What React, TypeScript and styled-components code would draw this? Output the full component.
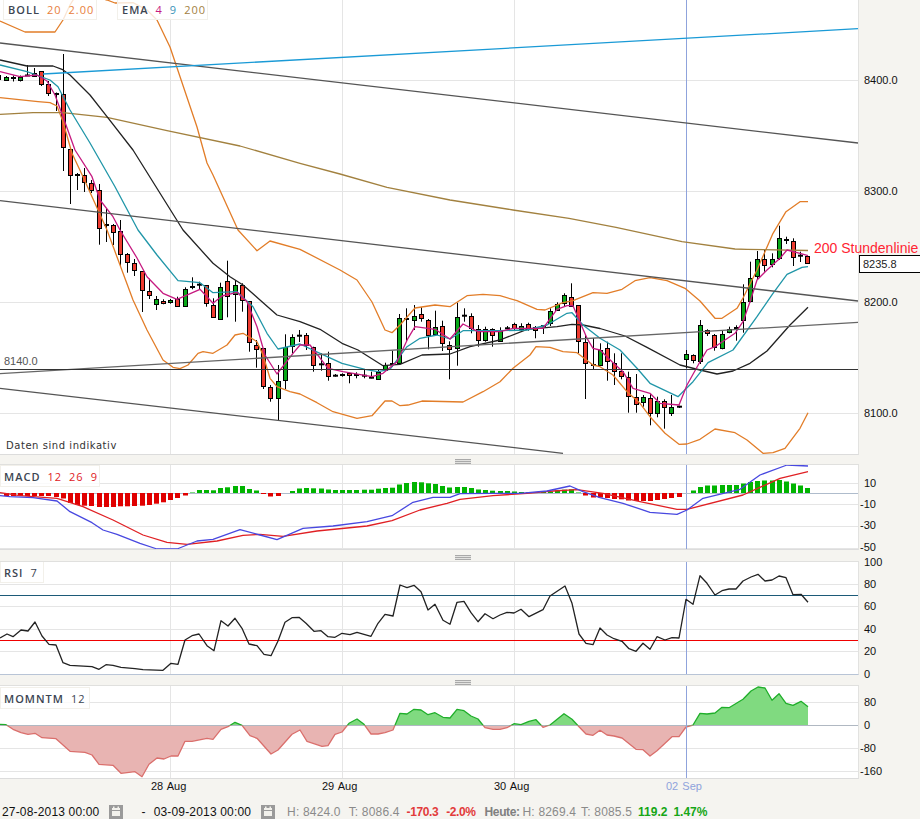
import React from 'react'
import styled, { createGlobalStyle } from 'styled-components'

type Pt = number[]
// kind, wick top, body top, body bottom, wick bottom
type Candle = [string, number, number, number, number]

const GlobalStyle = createGlobalStyle`
  html, body {
    margin: 0;
    padding: 0;
    background: #f5f4f0;
    overflow: hidden;
  }
`

const candles: Candle[] = [
  ['r', 75, 75, 79, 81], ['g', 76, 77, 79.5, 81], ['d', 75.5, 78, 78, 81.5], ['g', 75.5, 77, 79.5, 81.5],
  ['d', 65, 75.5, 75.5, 76], ['g', 68, 72.5, 75.5, 76], ['r', 71, 71, 83.5, 86], ['r', 81, 83.5, 92.3, 96],
  ['d', 92.5, 94, 94, 111], ['r', 54, 94, 147, 171], ['r', 147, 148.5, 174.5, 204], ['d', 173, 175, 175, 190],
  ['r', 168, 175, 182, 192], ['r', 180, 183, 190, 193], ['r', 184, 190, 228, 244.7], ['d', 209, 225, 225, 242],
  ['r', 224, 224.5, 231, 245], ['r', 220, 231, 254, 267], ['r', 253, 254, 262, 272.7], ['r', 259, 263.3, 270.7, 276],
  ['r', 271, 271.3, 290, 312], ['r', 278.7, 291.3, 295.7, 299], ['g', 296, 299.3, 304.3, 310], ['r', 299.3, 301.3, 303.3, 304.3],
  ['g', 299, 300.3, 302.3, 303.7], ['r', 296.7, 299, 305.7, 306.7], ['g', 287.3, 289.3, 306.3, 307], ['d', 277.3, 287, 287, 289.3],
  ['d', 281.7, 284.7, 284.7, 289.3], ['r', 285.3, 285.3, 303.3, 306.7], ['r', 298.3, 305.3, 317.3, 318], ['g', 282.7, 286.7, 318.3, 318.7],
  ['r', 260.7, 280.7, 295.3, 317.3], ['g', 280, 285.3, 294, 321.7], ['r', 283.3, 285.3, 300.7, 311.7], ['r', 301.3, 301.3, 342.7, 351.7],
  ['r', 340, 344.7, 348.3, 367.7], ['r', 348.3, 348.3, 386.3, 389], ['r', 385, 387.3, 398.7, 401.7], ['g', 365, 381.3, 398.7, 420],
  ['g', 334.3, 346.7, 379.7, 389], ['g', 334.3, 336.7, 345.7, 353.3], ['d', 330, 335.7, 335.7, 342], ['r', 333, 335.3, 345, 350],
  ['r', 346.7, 346.7, 364.7, 371.7], ['d', 353.3, 364.3, 364.3, 370.7], ['r', 351.7, 362.7, 376, 380.7], ['d', 374, 375.7, 375.7, 376.7],
  ['d', 373.3, 375, 375, 376.7], ['r', 372.7, 373.3, 375.7, 383.3], ['d', 372.3, 375, 375, 378.3], ['d', 370, 375.7, 375.7, 378.3],
  ['d', 371.7, 377.7, 377.7, 378.3], ['g', 370, 371.7, 378.7, 379.3], ['g', 362.7, 364.7, 369.3, 370], ['d', 350.7, 364, 364, 366.7],
  ['g', 314, 318.3, 363.7, 365], ['d', 308.3, 319, 319, 340.7], ['g', 305, 315.7, 319.7, 330], ['r', 307.3, 314.3, 318.7, 321.7],
  ['r', 319, 319.7, 334.3, 349.3], ['g', 310.7, 327.3, 334.7, 335], ['r', 320.7, 326.3, 343.7, 351], ['r', 341.3, 344.7, 348.3, 379.3],
  ['g', 302.7, 317.3, 348.3, 365.7], ['d', 308.3, 315.7, 315.7, 321.7], ['r', 313.3, 315.7, 327.3, 333.3], ['r', 325, 328.7, 339.3, 346.7],
  ['g', 326.7, 329.3, 340.7, 341.7], ['r', 328.3, 329.3, 335.3, 346.7], ['g', 327.3, 331.3, 341.3, 342], ['d', 326, 328.3, 328.3, 329.3],
  ['r', 322.7, 324.3, 328.7, 330.7], ['g', 323.3, 325.7, 329, 330.7], ['r', 322.7, 324.3, 328.7, 330.7], ['r', 326, 327.3, 330, 338.3],
  ['d', 325, 326, 326, 334], ['g', 308.3, 311.3, 323.3, 326], ['g', 302.3, 304.3, 310.3, 311], ['g', 293.3, 295.3, 303.7, 306],
  ['r', 283.3, 296.7, 305.3, 306], ['r', 305.3, 305.3, 341.3, 353.3], ['r', 334, 342.3, 363.7, 399], ['d', 338, 365, 365, 369],
  ['g', 343.3, 350, 364.7, 364.7], ['r', 341.7, 348.3, 361.3, 380.7], ['r', 353.3, 362.7, 370.3, 385], ['r', 353.3, 371, 375.7, 379.3],
  ['r', 371.7, 376.7, 395.7, 412.7], ['r', 374, 396.7, 403.3, 412.7], ['g', 395, 397.3, 402.3, 406.7], ['r', 394, 397.7, 412.3, 425.3],
  ['g', 396.7, 400.7, 412.3, 417.3], ['r', 399.3, 401.3, 407.3, 428.7], ['g', 395, 406.7, 412.3, 416], ['d', 405.7, 406.7, 406.7, 408],
  ['g', 350, 354.3, 359.7, 368.3], ['r', 354.3, 355.3, 360.7, 363.3], ['g', 320, 325.3, 361.3, 364], ['r', 329.3, 330.3, 333.7, 336],
  ['r', 334, 335.3, 347.3, 350.7], ['g', 330, 334.3, 348.3, 349.3], ['g', 326.7, 329.3, 332.7, 333.3], ['d', 325.3, 328, 328, 340.7],
  ['g', 284.3, 302.3, 320.3, 332.7], ['g', 261.7, 278.3, 301.3, 302.3], ['g', 251, 259.3, 276.7, 280], ['r', 250, 259.3, 265.7, 271.7],
  ['g', 253.3, 259.3, 264.7, 267.3], ['g', 225.7, 238.3, 258.3, 260], ['d', 236.7, 240, 240, 244], ['r', 238.3, 240.7, 256.3, 266],
  ['d', 251.7, 255.7, 255.7, 262], ['r', 255, 255.7, 262.7, 262.7]
]

const upperBand: Pt[] = [
  [0, 21], [25, 32], [55, 32], [63, 20], [70, 5], [78, -8], [107, 0], [115, 3], [133, 2.7], [147, 10], [157, 20], [170, 47],
  [197, 127], [207, 163], [213, 175], [238, 230], [257, 250.7], [270, 241], [300, 249.3], [340, 270], [357, 280], [372, 302],
  [385, 330], [392, 332.7], [400, 325], [415, 308], [435, 305], [450, 306.7], [467, 295.7], [483, 294.3], [500, 295.7],
  [517, 300.7], [537, 309.3], [545, 310], [563, 302.7], [573, 300.7], [593, 292.7], [607, 293.3], [622, 289.3], [635, 280.7],
  [650, 277.7], [667, 280.7], [685, 288.3], [700, 301], [715, 318.3], [722, 318.3], [737, 308.3], [743, 298], [757, 270],
  [773, 233.3], [786, 211.7], [800, 201.7], [808, 201.7]
]
const lowerBand: Pt[] = [
  [0, 97.7], [38, 101.7], [50, 102.7], [57, 106], [63, 121.7], [72, 153.3], [83, 176.7], [98, 210], [107, 230], [120, 265],
  [133, 300], [147, 330], [163, 360], [173, 367.3], [180, 368.7], [188, 365], [198, 353.3], [203, 351.7], [213, 353.3],
  [227, 345], [235, 335], [243, 333.3], [257, 341.7], [263, 355], [270, 378.3], [277, 386.7], [290, 391.7], [300, 394],
  [317, 402.7], [333, 411.7], [357, 418.3], [372, 415.7], [385, 401], [392, 401], [400, 405.7], [408, 405], [422, 401],
  [463, 402], [483, 391.7], [500, 381.7], [513, 368.3], [530, 355], [536, 346.7], [550, 347.3], [563, 351.7], [577, 352.7],
  [593, 365], [600, 366.7], [613, 375], [627, 391.7], [640, 403.3], [650, 416.7], [665, 433.3], [679, 444.3], [687, 444],
  [700, 439.3], [715, 429], [735, 432.7], [747, 440], [763, 453.3], [773, 452.7], [785, 448.3], [800, 428.3], [808, 412.7]
]
const ema200: Pt[] = [
  [0, 114.3], [33, 112.7], [63, 112.7], [107, 117.3], [167, 130.7], [240, 146], [300, 163.3], [340, 174], [387, 187.3],
  [450, 200], [513, 210], [569, 218.3], [616, 227.3], [682, 241.7], [735, 249], [747, 249.3], [808, 250.5]
]
const midBand: Pt[] = [
  [0, 60], [27, 66], [53, 66], [62, 69.3], [70, 75], [90, 95], [107, 116.7], [133, 150], [183, 230], [213, 263.3], [230, 276.7],
  [243, 285], [260, 300], [277, 315], [300, 321.7], [320, 329.3], [342, 343.3], [358, 350], [383, 365.7], [400, 364.3],
  [422, 355], [450, 354], [470, 346.7], [500, 340], [527, 329.3], [557, 326.7], [572, 324.3], [583, 325], [600, 328.5],
  [625, 336], [647, 347.3], [680, 365], [700, 370], [717, 374], [733, 371], [750, 363.3], [767, 351], [790, 325], [808, 307.3]
]
const ema9: Pt[] = [
  [0, 65], [27, 71.7], [50, 80], [58, 86.7], [70, 110], [90, 143], [115, 186.7], [138, 230], [157, 255], [178, 280.7],
  [200, 282.7], [213, 292.7], [237, 291.7], [253, 306.7], [267, 333.3], [278, 349], [300, 344], [320, 353.3], [342, 363.3],
  [365, 369.3], [378, 371.7], [390, 369.3], [407, 346.7], [420, 338.3], [437, 335], [450, 339], [463, 330.7], [500, 330.7],
  [527, 330], [547, 325], [567, 313.3], [572, 312.7], [583, 325], [600, 338.3], [620, 350], [637, 368.3], [650, 383.3],
  [678, 396.7], [693, 381.7], [708, 362.7], [733, 350], [757, 316.7], [773, 293.3], [787, 274.3], [802, 267.3], [808, 266.7]
]
const ema4: Pt[] = [
  [0, 71.7], [20, 76.7], [37, 75], [47, 81], [55, 95], [63, 116.7], [75, 150], [92, 176.7], [100, 200], [113, 216.7], [120, 230],
  [137, 258], [147, 276.7], [163, 293.3], [177, 299.3], [200, 289.3], [213, 303.3], [222, 296], [237, 292.3], [247, 301.7],
  [257, 326.7], [265, 355], [277, 374], [293, 353.3], [300, 345], [310, 345], [328, 368.3], [343, 371.7], [372, 376.7],
  [383, 373.3], [397, 361.7], [408, 338.3], [415, 326.7], [435, 329.3], [450, 339], [463, 324], [478, 331.7], [500, 331.7],
  [513, 328.3], [543, 328.3], [557, 309.3], [567, 305.7], [573, 305.7], [587, 338.3], [593, 348.3], [600, 350], [612, 361.7],
  [623, 371.7], [633, 388.3], [650, 393.3], [660, 403.3], [679, 405], [687, 385], [700, 361.7], [707, 350], [715, 346.7],
  [735, 333.3], [743, 321.7], [750, 301.7], [757, 280], [767, 270], [780, 258.3], [787, 250], [800, 253.3], [808, 255.7]
]

// MACD histogram, one bar per candle starting at the second one
const histogram = [
  -3, -3, -3, -3, -3, -3, -3, -4, -5.5, -10, -12, -12.7, -13, -14, -14, -14, -13.3, -13.3, -13, -12.7, -12, -10.7, -9.3, -7, -5,
  -2.5, 0.5, 3, 3, 2.7, 5, 5.7, 7, 7, 4, 2.5, -1, -3.5, -3, 0, 2, 4.5, 5, 4.7, 4.5, 3.5, 3, 3, 3, 3, 3.3, 3.3, 4.3, 5, 5.3, 8.5, 10,
  11, 10.7, 9.7, 9, 7, 5.5, 6, 6, 5, 3.5, 3, 2.3, 2, 2, 1.5, 1, 0.7, 0.7, 1, 1.5, 2.5, 3.3, 3.7, 0.5, -2.5, -4.5, -4.5, -5, -6, -6.3,
  -7.5, -8, -8, -8, -7, -6, -5, -4, 0, 2.5, 6, 7.5, 7.5, 8, 8, 8, 9.5, 11, 12, 12.5, 12.5, 13, 11.5, 9.5, 7.5, 5
]

const macdLine: Pt[] = [
  [0, 495.7], [10, 496.7], [33, 497.7], [57, 501], [70, 511.7], [92, 522.7], [103, 530], [117, 534.3], [140, 543.3], [157, 549],
  [177, 549], [197, 541], [213, 539.3], [240, 529.7], [260, 535], [277, 539.7], [303, 528.3], [333, 526], [367, 521.7], [392, 515.7],
  [413, 502.3], [433, 497.3], [450, 497.3], [460, 493.7], [493, 493.3], [520, 493.3], [547, 491], [570, 486], [583, 491.7], [600, 497.7],
  [623, 503.3], [650, 512.3], [677, 514.3], [687, 510], [703, 498.3], [740, 489.3], [760, 475], [787, 465], [808, 466]
]
const signalLine: Pt[] = [
  [0, 492.7], [20, 495.7], [57, 498.3], [83, 506.7], [113, 520], [143, 535], [167, 542.3], [187, 544.3], [217, 541], [243, 535.3],
  [260, 534.3], [283, 536.3], [317, 531], [367, 526], [392, 520.7], [420, 510], [447, 503.3], [460, 499.3], [493, 495.7], [527, 493.3],
  [553, 491], [577, 489.7], [603, 493.3], [640, 501.7], [677, 509.3], [687, 509.3], [743, 495], [780, 478.3], [808, 471.7]
]

const rsiLine: Pt[] = [
  [0, 638], [7, 634], [13, 636.7], [21, 630], [28, 631], [35, 622], [42, 636], [49, 644.3], [56, 645], [63, 662.7], [70, 665.3],
  [92, 666.7], [99, 669.3], [106, 664.7], [113, 665.3], [121, 667.3], [135, 668.7], [143, 669.7], [163, 670.3], [171, 663.3],
  [178, 664.3], [185, 640], [192, 635.7], [199, 634], [207, 645.7], [214, 650.7], [221, 620.7], [228, 626], [235, 618.3], [242, 628.3],
  [249, 644], [257, 645.7], [264, 654.3], [271, 655.7], [278, 641], [285, 622.3], [292, 617.7], [299, 617.3], [306, 623.3], [314, 631.3],
  [321, 630.7], [328, 636.7], [335, 637.3], [342, 633.3], [350, 634.7], [357, 632.3], [371, 636.3], [378, 623.3], [385, 614.3],
  [393, 616], [400, 585], [407, 587.7], [414, 585.3], [421, 591.7], [428, 610], [435, 604.3], [443, 620.3], [450, 624.3], [457, 602.3],
  [464, 601.3], [471, 612.7], [478, 621.7], [485, 613.7], [493, 618.7], [500, 615], [507, 612.3], [514, 613], [521, 609.3], [529, 616.7],
  [543, 609.7], [550, 596], [565, 586], [572, 603.3], [579, 634], [586, 643.3], [593, 644.7], [600, 628], [607, 635], [614, 638.7],
  [622, 641.3], [629, 648.7], [636, 651.3], [643, 643.3], [650, 649.3], [657, 636.7], [665, 640], [672, 637.7], [679, 638], [686, 599.3],
  [693, 604.3], [700, 575.7], [707, 583.3], [715, 595], [722, 590.7], [729, 589], [736, 589], [743, 581], [751, 577], [758, 574.3],
  [765, 581], [772, 580], [779, 576], [786, 577.7], [793, 594.7], [801, 594.3], [808, 602.3]
]

const momentumLine: Pt[] = [
  [0, 724.3], [6, 724.7], [13, 729.3], [21, 732.7], [28, 734.3], [35, 733.3], [42, 737.7], [56, 738.7], [63, 745], [70, 751.3], [85, 752.3],
  [92, 755], [99, 764.3], [113, 765.3], [121, 773.3], [135, 771.7], [142, 776.7], [149, 764.3], [157, 758], [164, 759], [171, 756], [178, 756],
  [185, 741.3], [192, 741.3], [207, 738.3], [213, 739.3], [221, 729.3], [228, 726.7], [235, 722.3], [242, 725.3], [250, 735.7], [257, 738.3],
  [271, 754], [278, 750], [292, 734.3], [300, 730], [307, 741.3], [322, 746.3], [328, 745.7], [335, 734.3], [342, 732], [349, 723.3],
  [357, 719], [364, 724.3], [371, 734], [378, 734], [385, 732.7], [393, 730], [400, 713.3], [407, 714], [414, 709.3], [421, 710], [428, 714.7],
  [435, 712.7], [443, 717.3], [450, 718], [457, 709.3], [464, 710.7], [471, 716], [478, 719], [485, 727.7], [493, 729.3], [500, 729.3],
  [507, 727.7], [514, 723.7], [521, 724.7], [529, 721.3], [536, 719.7], [543, 727.3], [550, 725], [564, 713.7], [572, 719.3], [579, 726.7],
  [586, 734], [593, 735.3], [600, 730.3], [607, 735], [614, 736], [622, 738], [636, 749.3], [643, 749.7], [650, 756], [657, 750.7],
  [672, 736.7], [679, 736.7], [686, 727], [693, 725], [700, 713.3], [707, 714], [715, 713], [722, 707.3], [729, 707.7], [743, 699.3],
  [751, 691], [758, 687], [765, 688], [772, 700.3], [779, 693.7], [786, 703.3], [793, 705.3], [801, 701.3], [808, 706.7]
]

const MAIN_GRID = [80.5, 191.5, 302.5, 413.5]
const MACD_GRID = [483.5, 504.5, 526.5, 548.5]
const RSI_GRID = [584.5, 606.5, 629.5, 651.5]
const MOM_GRID = [702.5, 748.5, 771.5]
const DAY_GRID = [170.5, 342.5, 514.5]

const candleX = (i: number) => Math.floor(6 + 7.16 * i) + 0.5
const toPoints = (pts: Pt[]) => pts.map(p => p.join(',')).join(' ')

const Page = styled.div`
  width: 920px;
  height: 819px;
  display: flex;
  flex-direction: column;
  background: #f5f4f0;
  font-family: "Liberation Sans", Arial, sans-serif;
  overflow: hidden;
`

const PaneRow = styled.div<{ $height: number }>`
  display: flex;
  height: ${p => p.$height}px;
  flex: none;
`

const Plot = styled.div`
  position: relative;
  width: 859px;
  flex: none;
  background: #fff;
  &::after {
    content: '';
    position: absolute;
    inset: 0;
    border-right: 1px solid #e2e2e0;
    border-bottom: 1px solid #dcdcdc;
    pointer-events: none;
  }
`

const PlotTop = styled(Plot)`
  &::after {
    border-top: 1px solid #e0e0de;
  }
`

const PlotBlueBottom = styled(PlotTop)`
  &::after {
    border-bottom-color: #b8c4d6;
  }
`

const ChartSvg = styled.svg`
  display: block;
  width: 859px;
  height: 100%;
`

const Axis = styled.div`
  position: relative;
  flex: 1;
`

const Tick = styled.span<{ $y: number; $x?: number }>`
  position: absolute;
  left: ${p => p.$x ?? 5}px;
  top: ${p => p.$y}px;
  transform: translateY(-50%);
  font-size: 11px;
  line-height: 13px;
  color: #111;
`

const PriceBox = styled.div`
  position: absolute;
  left: 0;
  top: 255px;
  width: 70px;
  height: 18px;
  box-sizing: border-box;
  padding-left: 3px;
  background: #fff;
  border: 1px solid #000;
  font-size: 11px;
  line-height: 16px;
  color: #222;
`

const LineNote = styled.div`
  position: absolute;
  left: 814px;
  top: 240px;
  font-size: 14px;
  line-height: 16px;
  color: #ff2433;
  white-space: nowrap;
  z-index: 2;
`

const Handle = styled.div<{ $height: number; $pad: number }>`
  flex: none;
  height: ${p => p.$height}px;
  padding-top: ${p => p.$pad}px;
  box-sizing: border-box;
  &::before {
    content: '';
    display: block;
    width: 16px;
    height: 5px;
    margin-left: 455px;
    background: repeating-linear-gradient(to bottom, #a9a9a9 0, #a9a9a9 1px, #e2e2e0 1px, #e2e2e0 2px);
  }
`

const Legend = styled.div<{ $left: number; $top: number; $width: number; $height: number }>`
  position: absolute;
  left: ${p => p.$left}px;
  top: ${p => p.$top}px;
  width: ${p => p.$width}px;
  height: ${p => p.$height}px;
  box-sizing: border-box;
  display: flex;
  align-items: center;
  gap: 7px;
  padding-left: ${p => (p.$left > 0 ? 4 : 3)}px;
  background: rgba(255, 255, 255, 0.8);
  border: 1px solid #f2f0ea;
  font-family: "Open Sans", sans-serif;
  font-size: 11px;
  font-weight: 600;
  letter-spacing: 1px;
  color: #3c4552;
`

const LegendValue = styled.span<{ $color: string }>`
  font-weight: 400;
  color: ${p => p.$color};
`

const ChartNote = styled.span<{ $left: number; $top: number }>`
  position: absolute;
  left: ${p => p.$left}px;
  top: ${p => p.$top}px;
  line-height: 13px;
  white-space: nowrap;
`

const LevelLabel = styled(ChartNote)`
  font-size: 11px;
  color: #555;
`

const DataNote = styled(ChartNote)`
  font-family: "DejaVu Sans", sans-serif;
  font-size: 10px;
  letter-spacing: 0.55px;
  color: #333;
`

const TimeAxis = styled.div`
  position: relative;
  height: 17px;
  flex: none;
`

const TimeLabel = styled.span<{ $x: number; $accent?: boolean }>`
  position: absolute;
  left: ${p => p.$x}px;
  top: 1px;
  font-size: 11px;
  line-height: 13px;
  white-space: nowrap;
  word-spacing: 1px;
  color: ${p => (p.$accent ? '#8fa3dc' : '#111')};
`

const StatusBar = styled.div`
  flex: 1;
  display: flex;
  align-items: center;
  padding: 8px 0 0 2px;
  font-size: 12px;
  white-space: nowrap;
`

const DateText = styled.span<{ $gap?: number }>`
  margin-left: ${p => p.$gap ?? 0}px;
  letter-spacing: 0.17px;
  color: #111;
`

const Stat = styled.span<{ $gap: number; $tone?: 'red' | 'green' }>`
  margin-left: ${p => p.$gap}px;
  font-weight: ${p => (p.$tone ? 700 : 400)};
  letter-spacing: ${p => (p.$tone === 'red' ? -0.4 : p.$tone ? 0 : 0.17)}px;
  color: ${p => (p.$tone === 'red' ? '#e23b3b' : p.$tone === 'green' ? '#16a616' : '#8a8a8a')};
`

const HeuteLabel = styled(Stat)`
  font-weight: 700;
  letter-spacing: -0.4px;
  color: #808080;
`

const CalendarBox = styled.svg<{ $gap: number }>`
  flex: none;
  display: block;
  width: 14px;
  height: 14px;
  margin-left: ${p => p.$gap}px;
`

const CalendarIcon = ({ gap }: { gap: number }) => (
  <CalendarBox $gap={gap} viewBox="0 0 14 14">
    <rect width="14" height="14" fill="#9a9a9a" />
    <rect x="3" y="3" width="8" height="8" fill="#f2f1ec" />
    <rect x="3" y="5" width="8" height="1" fill="#9a9a9a" />
    <rect x="4" y="1.5" width="1.5" height="3" fill="#f2f1ec" />
    <rect x="8.5" y="1.5" width="1.5" height="3" fill="#f2f1ec" />
  </CalendarBox>
)

const GridLines = ({ rows, top, bottom }: { rows: number[]; top: number; bottom: number }) => (
  <g stroke="#e5e5e5" strokeWidth="1">
    {rows.map(y => <line key={y} x1="0" x2="858" y1={y} y2={y} />)}
    {DAY_GRID.map(x => <line key={x} x1={x} x2={x} y1={top} y2={bottom} />)}
  </g>
)

const DayMarker = ({ top, bottom }: { top: number; bottom: number }) => (
  <line x1="686.5" x2="686.5" y1={top} y2={bottom} stroke="#8fa3dc" strokeWidth="1" />
)

const Trace = ({ pts, color, width = 1.3 }: { pts: Pt[]; color: string; width?: number }) => (
  <polyline points={toPoints(pts)} fill="none" stroke={color} strokeWidth={width} strokeLinejoin="round" />
)

const CandleMark = ({ candle, index }: { candle: Candle; index: number }) => {
  const [kind, wickTop, bodyTop, bodyBottom, wickBottom] = candle
  const x = candleX(index - 1)
  return (
    <g>
      <line x1={x} x2={x} y1={wickTop} y2={wickBottom} stroke="#000" strokeWidth="1" />
      {kind === 'd'
        ? <rect x={x - 2.5} y={bodyTop - 1} width="5" height="2" fill="#000" />
        : (
          <rect
            x={x - 2}
            y={Math.round(bodyTop) + 0.5}
            width="4"
            height={Math.max(1, Math.round(bodyBottom - bodyTop))}
            fill={kind === 'r' ? '#ee3b30' : '#08a818'}
            stroke="#000"
            strokeWidth="1"
          />
        )}
    </g>
  )
}

const MainChart = () => (
  <ChartSvg viewBox="0 0 859 455">
    <GridLines rows={MAIN_GRID} top={0} bottom={454} />
    <DayMarker top={0} bottom={454} />
    {candles.map((c, i) => <CandleMark key={i} candle={c} index={i} />)}
    <Trace pts={upperBand} color="#e27d28" />
    <Trace pts={lowerBand} color="#e27d28" />
    <Trace pts={ema200} color="#a2813f" />
    <Trace pts={midBand} color="#222" />
    <Trace pts={ema9} color="#2096a8" />
    <Trace pts={ema4} color="#c61a80" />
    <Trace pts={[[0, 43], [858, 143]]} color="#555" />
    <Trace pts={[[0, 200.7], [858, 301]]} color="#555" />
    <Trace pts={[[0, 373.7], [858, 322.3]]} color="#666" />
    <Trace pts={[[0, 388.3], [563, 453.3]]} color="#555" />
    <Trace pts={[[43, 74], [858, 28.7]]} color="#1a9ad6" />
    <line x1="0" x2="858" y1="369.5" y2="369.5" stroke="#333" strokeWidth="1" />
  </ChartSvg>
)

const MacdChart = () => (
  <ChartSvg viewBox="0 464 859 86">
    <GridLines rows={MACD_GRID} top={464} bottom={549} />
    <DayMarker top={464} bottom={549} />
    <line x1="0" x2="858" y1="493.5" y2="493.5" stroke="#afbccc" strokeWidth="1" />
    {histogram.map((v, i) => (
      <rect
        key={i}
        x={candleX(i) - 2.5}
        y={v > 0 ? 493 - v : 493}
        width="5"
        height={Math.abs(v)}
        fill={v > 0 ? '#00b400' : '#e00000'}
      />
    ))}
    <Trace pts={signalLine} color="#e02024" />
    <Trace pts={macdLine} color="#4848e0" />
  </ChartSvg>
)

const RsiChart = () => (
  <ChartSvg viewBox="0 561 859 114">
    <GridLines rows={RSI_GRID} top={561} bottom={674} />
    <DayMarker top={561} bottom={674} />
    <line x1="0" x2="858" y1="595.5" y2="595.5" stroke="#1c5a78" strokeWidth="1" />
    <line x1="0" x2="858" y1="640.5" y2="640.5" stroke="#f00000" strokeWidth="1" />
    <Trace pts={rsiLine} color="#222" />
  </ChartSvg>
)

const momentumArea = toPoints([[0, 725.5], ...momentumLine, [808, 725.5]])

const MomentumChart = () => (
  <ChartSvg viewBox="0 685 859 94">
    <defs>
      <clipPath id="above"><rect x="0" y="685" width="859" height="40.5" /></clipPath>
      <clipPath id="below"><rect x="0" y="725.5" width="859" height="54" /></clipPath>
    </defs>
    <GridLines rows={MOM_GRID} top={685} bottom={778} />
    <polygon points={momentumArea} fill="#80da80" clipPath="url(#above)" />
    <polygon points={momentumArea} fill="#e8b4b2" clipPath="url(#below)" />
    <line x1="0" x2="858" y1="725.5" y2="725.5" stroke="#b0b8c2" strokeWidth="1" />
    <g clipPath="url(#above)"><Trace pts={momentumLine} color="#1fae2a" /></g>
    <g clipPath="url(#below)"><Trace pts={momentumLine} color="#da6f6c" /></g>
    <DayMarker top={685} bottom={778} />
  </ChartSvg>
)

const App = () => (
  <Page>
    <GlobalStyle />
    <PaneRow $height={455}>
      <Plot>
        <MainChart />
        <Legend $left={3} $top={-1} $width={94} $height={21}>
          BOLL <LegendValue $color="#e8803c">20</LegendValue> <LegendValue $color="#e8803c">2.00</LegendValue>
        </Legend>
        <Legend $left={117} $top={-1} $width={91} $height={21}>
          EMA <LegendValue $color="#c61a80">4</LegendValue> <LegendValue $color="#3a94b8">9</LegendValue> <LegendValue $color="#a2813f">200</LegendValue>
        </Legend>
        <LevelLabel $left={4} $top={355}>8140.0</LevelLabel>
        <DataNote $left={6} $top={439}>Daten sind indikativ</DataNote>
        <LineNote>200 Stundenlinie</LineNote>
      </Plot>
      <Axis>
        <Tick $y={80}>8400.0</Tick>
        <Tick $y={191}>8300.0</Tick>
        <Tick $y={302}>8200.0</Tick>
        <Tick $y={413}>8100.0</Tick>
        <PriceBox>8235.8</PriceBox>
      </Axis>
    </PaneRow>
    <Handle $height={9} $pad={4} />
    <PaneRow $height={86}>
      <PlotTop>
        <MacdChart />
        <Legend $left={0} $top={1} $width={100} $height={22}>
          MACD <LegendValue $color="#e02024">12</LegendValue> <LegendValue $color="#e02024">26</LegendValue> <LegendValue $color="#e02024">9</LegendValue>
        </Legend>
      </PlotTop>
      <Axis>
        <Tick $y={19}>10</Tick>
        <Tick $y={40} $x={1}>-10</Tick>
        <Tick $y={61} $x={1}>-30</Tick>
        <Tick $y={83} $x={1}>-50</Tick>
      </Axis>
    </PaneRow>
    <Handle $height={11} $pad={5} />
    <PaneRow $height={114}>
      <PlotBlueBottom>
        <RsiChart />
        <Legend $left={0} $top={0} $width={44} $height={22}>
          RSI <LegendValue $color="#3c4552">7</LegendValue>
        </Legend>
      </PlotBlueBottom>
      <Axis>
        <Tick $y={1} $x={5}>100</Tick>
        <Tick $y={23}>80</Tick>
        <Tick $y={45}>60</Tick>
        <Tick $y={68}>40</Tick>
        <Tick $y={90}>20</Tick>
        <Tick $y={113}>0</Tick>
      </Axis>
    </PaneRow>
    <Handle $height={10} $pad={5} />
    <PaneRow $height={94}>
      <PlotTop>
        <MomentumChart />
        <Legend $left={0} $top={2} $width={90} $height={22}>
          MOMNTM <LegendValue $color="#3c4552">12</LegendValue>
        </Legend>
      </PlotTop>
      <Axis>
        <Tick $y={17}>80</Tick>
        <Tick $y={40}>0</Tick>
        <Tick $y={63} $x={1}>-80</Tick>
        <Tick $y={86} $x={1}>-160</Tick>
      </Axis>
    </PaneRow>
    <TimeAxis>
      <TimeLabel $x={151}>28 Aug</TimeLabel>
      <TimeLabel $x={322}>29 Aug</TimeLabel>
      <TimeLabel $x={494}>30 Aug</TimeLabel>
      <TimeLabel $x={666} $accent>02 Sep</TimeLabel>
    </TimeAxis>
    <StatusBar>
      <DateText>27-08-2013 00:00</DateText>
      <CalendarIcon gap={10} />
      <DateText $gap={18}>-</DateText>
      <DateText $gap={8}>03-09-2013 00:00</DateText>
      <CalendarIcon gap={10} />
      <Stat $gap={12}>H: 8424.0</Stat>
      <Stat $gap={8}>T: 8086.4</Stat>
      <Stat $gap={7} $tone="red">-170.3</Stat>
      <Stat $gap={8} $tone="red">-2.0%</Stat>
      <HeuteLabel $gap={9}>Heute:</HeuteLabel>
      <Stat $gap={3}>H: 8269.4</Stat>
      <Stat $gap={5}>T: 8085.5</Stat>
      <Stat $gap={6} $tone="green">119.2</Stat>
      <Stat $gap={6} $tone="green">1.47%</Stat>
    </StatusBar>
  </Page>
)

export default App
